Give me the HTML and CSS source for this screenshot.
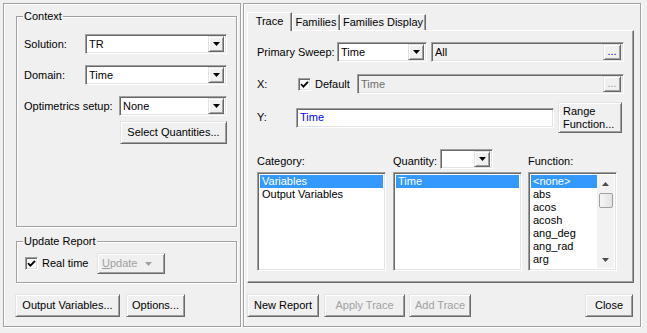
FILE: index.html
```html
<!DOCTYPE html>
<html>
<head>
<meta charset="utf-8">
<link rel="stylesheet" href="styles.css">
</head>
<body>
<div class="dialog">
  <div class="panel panel-left">
    <div class="group context">
      <span class="legend">Context</span>
      <div class="row">
        <span class="lbl lbl-a">Solution:</span>
        <div class="combo w142"><span class="val">TR</span><span class="drop"><svg width="7" height="4" viewBox="0 0 7 4"><path d="M0 0h7L3.5 4z" fill="#000"/></svg></span></div>
      </div>
      <div class="row">
        <span class="lbl lbl-a">Domain:</span>
        <div class="combo w142"><span class="val">Time</span><span class="drop"><svg width="7" height="4" viewBox="0 0 7 4"><path d="M0 0h7L3.5 4z" fill="#000"/></svg></span></div>
      </div>
      <div class="row row-last">
        <span class="lbl lbl-b">Optimetrics setup:</span>
        <div class="combo w108"><span class="val">None</span><span class="drop"><svg width="7" height="4" viewBox="0 0 7 4"><path d="M0 0h7L3.5 4z" fill="#000"/></svg></span></div>
      </div>
      <div class="btn btn-selq">Select Quantities...</div>
    </div>
    <div class="group update">
      <span class="legend">Update Report</span>
      <div class="check check-rt">
        <span class="box"><svg width="9" height="9" viewBox="0 0 9 9"><path d="M1 4.2 L3.4 6.6 L8 1.8" fill="none" stroke="#000" stroke-width="1.9"/></svg></span>
        <span>Real time</span>
      </div>
      <div class="btn disabled btn-upd"><span><u>U</u>pdate</span><svg class="upd-arrow" width="7" height="4" viewBox="0 0 7 4"><path d="M0 0h7L3.5 4z" fill="#a0a0a0"/></svg></div>
    </div>
    <div class="btn-row">
      <div class="btn btn-outvars">Output Variables...</div>
      <div class="btn btn-options">Options...</div>
    </div>
  </div>

  <div class="panel panel-right">
    <div class="tabs">
      <div class="tab active tab-trace">Trace</div>
      <div class="tab tab-fam">Families</div>
      <div class="tab tab-famdisp">Families Display</div>
    </div>
    <div class="tabpanel">
      <div class="prow">
        <span class="lbl lbl-ps">Primary Sweep:</span>
        <div class="combo w90"><span class="val">Time</span><span class="drop"><svg width="7" height="4" viewBox="0 0 7 4"><path d="M0 0h7L3.5 4z" fill="#000"/></svg></span></div>
        <div class="field ro w193"><span class="val">All</span><span class="dots">...</span></div>
      </div>
      <div class="prow xrow">
        <span class="lbl lbl-x">X:</span>
        <div class="check check-def">
          <span class="box"><svg width="9" height="9" viewBox="0 0 9 9"><path d="M1 4.2 L3.4 6.6 L8 1.8" fill="none" stroke="#000" stroke-width="1.9"/></svg></span>
          <span>Default</span>
        </div>
        <div class="field ro dis w267"><span class="val">Time</span><span class="dots">...</span></div>
      </div>
      <div class="prow yrow">
        <span class="lbl lbl-y">Y:</span>
        <div class="field white w258"><span class="val blue">Time</span></div>
        <div class="btn btn-range"><span>Range<br>Function...</span></div>
      </div>
      <div class="lists">
        <div class="col col-cat">
          <div class="lhead"><span class="lbl">Category:</span></div>
          <div class="list">
            <div class="item sel">Variables</div>
            <div class="item">Output Variables</div>
          </div>
        </div>
        <div class="col col-qty">
          <div class="lhead"><span class="lbl qlbl">Quantity:</span>
            <div class="combo w53"><span class="val"></span><span class="drop"><svg width="7" height="4" viewBox="0 0 7 4"><path d="M0 0h7L3.5 4z" fill="#000"/></svg></span></div>
          </div>
          <div class="list">
            <div class="item sel">Time</div>
          </div>
        </div>
        <div class="col col-fn">
          <div class="lhead"><span class="lbl">Function:</span></div>
          <div class="list fnlist">
            <div class="items">
              <div class="item sel">&lt;none&gt;</div>
              <div class="item">abs</div>
              <div class="item">acos</div>
              <div class="item">acosh</div>
              <div class="item">ang_deg</div>
              <div class="item">ang_rad</div>
              <div class="item">arg</div>
              <div class="item">asin</div>
            </div>
            <div class="sbar">
              <div class="sbtn"><svg width="7" height="4" viewBox="0 0 7 4"><path d="M0 4h7L3.5 0z" fill="#4a4a4a"/></svg></div>
              <div class="thumb"></div>
              <div class="strack"></div>
              <div class="sbtn"><svg width="7" height="4" viewBox="0 0 7 4"><path d="M0 0h7L3.5 4z" fill="#4a4a4a"/></svg></div>
            </div>
          </div>
        </div>
      </div>
    </div>
    <div class="btn-row">
      <div class="btn btn-new">New Report</div>
      <div class="btn disabled btn-apply">Apply Trace</div>
      <div class="btn disabled btn-add">Add Trace</div>
      <div class="btn btn-close">Close</div>
    </div>
  </div>
</div>
</body>
</html>
```
FILE: styles.css
```css
* { box-sizing: border-box; }

body {
  margin: 0;
  width: 647px;
  height: 333px;
  overflow: hidden;
  background: #f0f0f0;
  color: #000;
  font: 11px/13px "Liberation Sans", Arial, sans-serif;
}

.dialog {
  display: flex;
  gap: 2px;
  padding: 3px 0 0 3px;
}

.panel {
  height: 324px;
  border: 1px solid #a0a0a0;
  box-shadow: inset 1px 1px 0 #fff, 1px 1px 0 #fff;
}

.panel-left {
  width: 238px;
  padding: 12px 0 0 11px;
}

.panel-right {
  width: 398px;
  padding: 8px 7px 0 3px;
}

/* group boxes */
.group {
  position: relative;
  width: 221px;
  margin-left: 1px;
  border: 1px solid #a0a0a0;
  box-shadow: inset 1px 1px 0 #fff, 1px 1px 0 #fff;
}

.legend {
  position: absolute;
  top: -7px;
  left: 6px;
  padding: 0 1px;
  background: #f0f0f0;
}

.context {
  height: 211px;
  padding: 17px 0 0 7px;
}

.update {
  height: 42px;
  margin-top: 14px;
  display: flex;
  align-items: center;
  padding: 3px 0 0 8px;
}

.row {
  display: flex;
  align-items: center;
  height: 20px;
  margin-bottom: 11px;
}

.row-last { margin-bottom: 5px; }

.lbl { white-space: nowrap; }
.lbl-a { width: 61px; }
.lbl-b { width: 95px; }

/* combo */
.combo, .field {
  display: flex;
  align-items: center;
  height: 20px;
  padding: 2px;
  background: #fff;
  border: 1px solid;
  border-color: #a0a0a0 #fff #fff #a0a0a0;
  box-shadow: inset 1px 1px 0 #696969, inset -1px -1px 0 #e3e3e3;
}

.w142 { width: 142px; }
.w108 { width: 108px; }
.w90 { width: 90px; }
.w53 { width: 53px; }
.w193 { width: 193px; margin-left: 4px; }
.w267 { width: 267px; }
.w258 { width: 258px; }

.val {
  flex: 1;
  padding-left: 1px;
  white-space: nowrap;
  overflow: hidden;
}

.drop {
  width: 16px;
  height: 16px;
  display: flex;
  align-items: center;
  justify-content: center;
  background: #f0f0f0;
  border: 1px solid;
  border-color: #e3e3e3 #696969 #696969 #e3e3e3;
  box-shadow: inset 1px 1px 0 #fff, inset -1px -1px 0 #a0a0a0;
}

.field.ro { background: #f0f0f0; }
.field.dis .val { color: #6d6d6d; }
.blue { color: #0000ff; }

.dots {
  width: 18px;
  height: 16px;
  display: flex;
  align-items: center;
  justify-content: center;
  padding-bottom: 2px;
  color: #0000ff;
  background: #f0f0f0;
  border: 1px solid;
  border-color: #e3e3e3 #696969 #696969 #e3e3e3;
  box-shadow: inset 1px 1px 0 #fff, inset -1px -1px 0 #a0a0a0;
  letter-spacing: 0;
}

.field.dis .dots { color: #a0a0a0; }

/* buttons */
.btn {
  display: flex;
  align-items: center;
  justify-content: center;
  height: 23px;
  white-space: nowrap;
  background: #f0f0f0;
  border: 1px solid;
  border-color: #e3e3e3 #696969 #696969 #e3e3e3;
  box-shadow: inset 1px 1px 0 #fff, inset -1px -1px 0 #a0a0a0;
}

.btn.disabled { color: #a0a0a0; }

.btn-selq { width: 107px; margin-left: 96px; }

.btn-upd {
  width: 68px;
  height: 21px;
  justify-content: flex-start;
  padding-left: 4px;
}
.upd-arrow { margin-left: 8px; }

.btn-row {
  display: flex;
  margin-top: 11px;
}

.btn-outvars { width: 105px; }
.btn-options { width: 59px; margin-left: 6px; }

.btn-new { width: 72px; }
.btn-apply { width: 81px; margin-left: 5px; }
.btn-add { width: 62px; margin-left: 4px; }
.btn-close { width: 48px; margin-left: auto; }

/* checkbox */
.check {
  display: flex;
  align-items: center;
  gap: 4px;
  white-space: nowrap;
}
.check-rt { width: 72px; }
.check-def { width: 59px; }

.box {
  width: 13px;
  height: 13px;
  display: flex;
  align-items: center;
  justify-content: center;
  background: #fff;
  border: 1px solid;
  border-color: #a0a0a0 #fff #fff #a0a0a0;
  box-shadow: inset 1px 1px 0 #696969, inset -1px -1px 0 #e3e3e3;
}

/* tabs */
.tabs {
  display: flex;
  align-items: flex-end;
  height: 18px;
}

.tab {
  height: 16px;
  display: flex;
  align-items: center;
  justify-content: center;
  white-space: nowrap;
  background: #f0f0f0;
  border: 1px solid;
  border-bottom: none;
  border-color: #fff #696969 #696969 #fff;
  box-shadow: inset -1px 0 0 #a0a0a0;
}

.tab.active {
  height: 19px;
  margin-bottom: -1px;
  position: relative;
  z-index: 1;
  padding-bottom: 2px;
}

.tab-trace { width: 45px; }
.tab-fam { width: 48px; }
.tab-famdisp { width: 86px; }

.tabpanel {
  width: 387px;
  height: 253px;
  padding: 11px 0 0 9px;
  border: 1px solid;
  border-color: #fff #696969 #696969 #fff;
  box-shadow: inset -1px -1px 0 #a0a0a0;
}

.prow {
  display: flex;
  align-items: center;
  height: 20px;
}

.lbl-ps { width: 80px; }
.lbl-x { width: 41px; }
.lbl-y { width: 39px; }

.xrow { margin-top: 12px; }
.yrow { margin-top: 8px; height: 31px; }

.btn-range {
  width: 64px;
  height: 31px;
  margin-left: 4px;
  justify-content: flex-start;
  padding-left: 4px;
  white-space: normal;
}

/* lists */
.lists {
  display: flex;
  margin-top: 16px;
}

.col-cat { width: 129px; }
.col-qty { width: 129px; margin-left: 7px; }
.col-fn { width: 89px; margin-left: 6px; }

.lhead {
  display: flex;
  align-items: flex-end;
  height: 20px;
}
.lhead .lbl { margin-bottom: 1px; }
.qlbl { width: 47px; }

.list {
  height: 99px;
  margin-top: 3px;
  padding: 2px;
  background: #fff;
  border: 1px solid;
  border-color: #a0a0a0 #fff #fff #a0a0a0;
  box-shadow: inset 1px 1px 0 #696969, inset -1px -1px 0 #e3e3e3;
  overflow: hidden;
}

.item {
  height: 13px;
  padding-left: 2px;
  white-space: nowrap;
}

.item.sel {
  background: #3399ff;
  color: #fff;
}

.fnlist { display: flex; }
.items { flex: 1; overflow: hidden; }

.sbar {
  width: 17px;
  display: flex;
  flex-direction: column;
  background: #f2f2f2;
}

.sbtn {
  height: 17px;
  display: flex;
  align-items: center;
  justify-content: center;
}

.thumb {
  height: 15px;
  margin: 1px 1px 0 2px;
  border: 1px solid #a0a0a0;
  border-radius: 2px;
  background: linear-gradient(to right, #f6f6f6, #e2e2e2);
}

.strack { flex: 1; }
```
